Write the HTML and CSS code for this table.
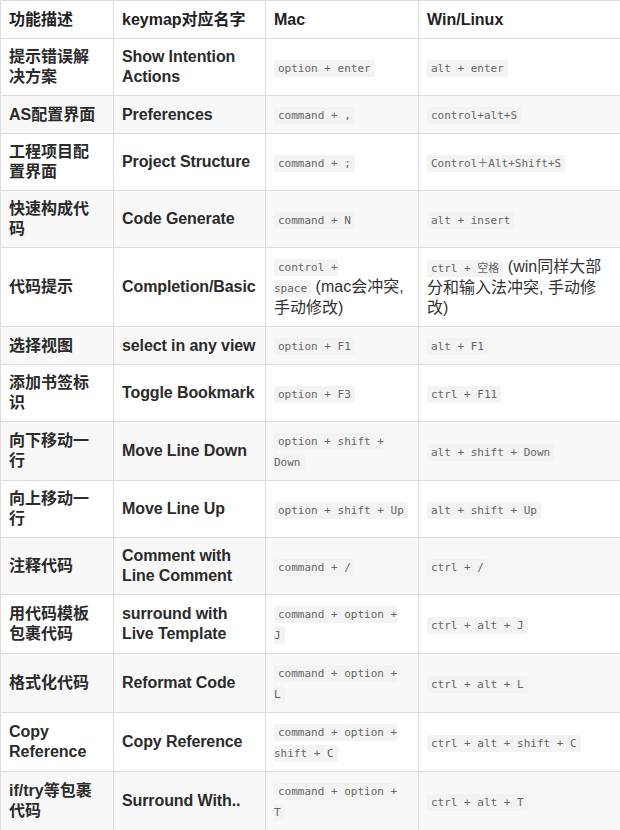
FILE: index.html
```html
<!DOCTYPE html>
<html lang="zh">
<head>
<meta charset="utf-8">
<link rel="stylesheet" href="styles.css">
</head>
<body>
<table class="keys">
  <colgroup>
    <col class="c1"><col class="c2"><col class="c3"><col class="c4">
  </colgroup>
  <thead>
    <tr><th>功能描述</th><th>keymap对应名字</th><th>Mac</th><th>Win/Linux</th></tr>
  </thead>
  <tbody>
    <tr><td class="b">提示错误解决方案</td><td class="b">Show Intention Actions</td><td><code>option + enter</code></td><td><code>alt + enter</code></td></tr>
    <tr><td class="b">AS配置界面</td><td class="b">Preferences</td><td><code>command + ,</code></td><td><code>control+alt+S</code></td></tr>
    <tr><td class="b">工程项目配置界面</td><td class="b">Project Structure</td><td><code>command + ;</code></td><td><code>Control＋Alt+Shift+S</code></td></tr>
    <tr><td class="b">快速构成代码</td><td class="b">Code Generate</td><td><code>command + N</code></td><td><code>alt + insert</code></td></tr>
    <tr><td class="b">代码提示</td><td class="b">Completion/Basic</td><td><code>control + space</code>&nbsp;(mac会冲突, 手动修改)</td><td><code>ctrl + 空格</code> (win同样大部分和输入法冲突, 手动修改)</td></tr>
    <tr><td class="b">选择视图</td><td class="b">select in any view</td><td><code>option + F1</code></td><td><code>alt + F1</code></td></tr>
    <tr><td class="b">添加书签标识</td><td class="b">Toggle Bookmark</td><td><code>option + F3</code></td><td><code>ctrl + F11</code></td></tr>
    <tr><td class="b">向下移动一行</td><td class="b">Move Line Down</td><td><code>option + shift + Down</code></td><td><code>alt + shift + Down</code></td></tr>
    <tr><td class="b">向上移动一行</td><td class="b">Move Line Up</td><td><code>option + shift + Up</code></td><td><code>alt + shift + Up</code></td></tr>
    <tr><td class="b">注释代码</td><td class="b">Comment with Line Comment</td><td><code>command + /</code></td><td><code>ctrl + /</code></td></tr>
    <tr><td class="b">用代码模板包裹代码</td><td class="b">surround with Live Template</td><td><code>command + option + J</code></td><td><code>ctrl + alt + J</code></td></tr>
    <tr><td class="b">格式化代码</td><td class="b">Reformat Code</td><td><code>command + option + L</code></td><td><code>ctrl + alt + L</code></td></tr>
    <tr><td class="b">Copy Reference</td><td class="b">Copy Reference</td><td><code>command + option + shift + C</code></td><td><code>ctrl + alt + shift + C</code></td></tr>
    <tr><td class="b">if/try等包裹代码</td><td class="b">Surround With..</td><td><code>command + option + T</code></td><td><code>ctrl + alt + T</code></td></tr>
  </tbody>
</table>
</body>
</html>
```

FILE: styles.css
```css
html, body {
  margin: 0;
  padding: 0;
  background: #fff;
}

body {
  font-family: "Liberation Sans", Arial, "Noto Sans CJK SC", sans-serif;
  font-size: 16px;
  line-height: 20px;
  color: #333;
}

.keys {
  border-collapse: collapse;
  width: 620px;
  table-layout: fixed;
}

.c1 { width: 113px; }
.c2 { width: 152px; }
.c3 { width: 153px; }
.c4 { width: 202px; }

.keys th,
.keys td {
  border: 1px solid #dddddd;
  padding: 8px 8px;
  text-align: left;
  vertical-align: middle;
  word-wrap: break-word;
}

.keys th {
  padding-top: 9px;
  padding-bottom: 8px;
}

.keys th:first-child,
.keys td:first-child {
  padding-right: 13px;
}

.keys th:nth-child(2),
.keys td:nth-child(2) {
  padding-right: 2px;
}

.keys th {
  font-weight: bold;
  color: #222;
  background: #fff;
}

.keys td.b {
  font-weight: bold;
  color: #2b2b2b;
}

.keys td:nth-child(2) {
  letter-spacing: -0.1px;
}

.keys tbody tr:nth-child(even) td {
  background: #f8f8f8;
}

.keys code {
  font-family: "DejaVu Sans Mono", "Liberation Mono", "Noto Sans CJK SC", monospace;
  font-size: 11px;
  line-height: 18px;
  letter-spacing: 0;
  color: #666;
  background: #f3f3f3;
  padding: 2px 4px;
  border-radius: 3px;
}
```
